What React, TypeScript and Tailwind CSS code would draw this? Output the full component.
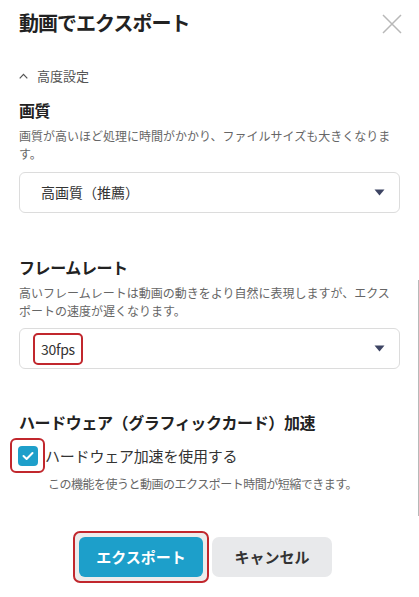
import { useState } from 'react';

const jp = { fontFamily: '"Noto Sans CJK JP", "Noto Sans", sans-serif' };

function Caret() {
  return (
    <svg width="11" height="7" viewBox="0 0 11 7" aria-hidden="true">
      <path d="M0.5 0.5h10L5.5 6.5z" fill="#3d4463" />
    </svg>
  );
}

function Section({ title, desc, children }: { title: string; desc?: string; children: React.ReactNode }) {
  return (
    <section>
      <h3 className="text-[16px] font-bold leading-[24px] tracking-[-0.4px] text-[#222]">{title}</h3>
      {desc && <p className="mt-[5px] text-[12px] leading-[18px] text-[#666]">{desc}</p>}
      {children}
    </section>
  );
}

export default function App() {
  const [hw, setHw] = useState(true);

  return (
    <div className="relative h-[597px] w-[419px] overflow-hidden bg-white px-[19px]" style={jp}>
      {/* header */}
      <div className="flex items-center justify-between pt-[9px]">
        <h2 className="text-[20px] font-bold leading-[28px] tracking-[-1px] text-[#222]">動画でエクスポート</h2>
        <svg width="20" height="20" viewBox="0 0 20 20" className="mr-[-2px] mt-[1px]" aria-hidden="true">
          <path d="M1 1L19 19M19 1L1 19" stroke="#b8b8b8" strokeWidth="1.5" fill="none" />
        </svg>
      </div>

      <button className="mt-[29px] flex items-center gap-[9px] text-[13px] leading-[20px] text-[#555]">
        <svg width="9" height="6" viewBox="0 0 9 6" aria-hidden="true">
          <path d="M0.7 5.3L4.5 1.3L8.3 5.3" stroke="#555" strokeWidth="1.2" fill="none" />
        </svg>
        高度設定
      </button>

      <div className="mt-[12px]">
        <Section title="画質" desc="画質が高いほど処理に時間がかかり、ファイルサイズも大きくなります。">
          <div className="mt-[9px] flex h-[41px] items-center justify-between rounded-[6px] border border-[#dcdcdc] pl-[21px] pr-[14px]">
            <span className="text-[14px] text-[#333]">高画質（推薦）</span>
            <Caret />
          </div>
        </Section>
      </div>

      <div className="mt-[42px]">
        <Section title="フレームレート" desc="高いフレームレートは動画の動きをより自然に表現しますが、エクスポートの速度が遅くなります。">
          <div className="mt-[8px] flex h-[41px] items-center justify-between rounded-[6px] border border-[#dcdcdc] pl-[13px] pr-[14px]">
            <span className="rounded-[5px] border-2 border-[#c1272d] px-[6px] py-[4px] text-[14px] leading-[20px] tracking-[-0.3px] text-[#333]">
              30fps
            </span>
            <Caret />
          </div>
        </Section>
      </div>

      <div className="mt-[41px]">
        <Section title="ハードウェア（グラフィックカード）加速">
          <label className="mt-[4px] flex items-center">
            <span className="ml-[-9px] flex h-[35px] w-[35px] items-center justify-center rounded-[6px] border-2 border-[#c1272d]">
              <span
                onClick={() => setHw(!hw)}
                className={`flex h-[20px] w-[20px] items-center justify-center rounded-[4px] ${hw ? 'bg-[#1e9fca]' : 'border border-[#bbb] bg-white'}`}
              >
                {hw && (
                  <svg width="12" height="10" viewBox="0 0 12 10" aria-hidden="true">
                    <path d="M1.5 5L4.6 8L10.5 2" stroke="white" strokeWidth="2" fill="none" strokeLinecap="round" strokeLinejoin="round" />
                  </svg>
                )}
              </span>
            </span>
            <span className="text-[15px] leading-[22px] tracking-[-0.2px] text-[#333]">ハードウェア加速を使用する</span>
          </label>
          <p className="ml-[29px] mt-[2px] text-[12px] leading-[18px] tracking-[-0.5px] text-[#666]">この機能を使うと動画のエクスポート時間が短縮できます。</p>
        </Section>
      </div>

      <div className="ml-[54px] mt-[38px] flex items-center gap-[3px]">
        <div className="rounded-[7px] border-2 border-[#c1272d] bg-[#ececec] p-[4px]">
          <button className="flex h-[40px] w-[124px] items-center justify-center rounded-[6px] bg-[#1d9fca] text-[15px] font-bold text-white">
            エクスポート
          </button>
        </div>
        <button className="flex h-[40px] w-[120px] items-center justify-center rounded-[7px] bg-[#e8e9eb] text-[15px] font-bold text-[#333]">
          キャンセル
        </button>
      </div>

      {/* scroll track edge */}
      <div className="absolute right-0 top-[280px] h-[236px] w-px bg-[#b8b8b8]" />
    </div>
  );
}
